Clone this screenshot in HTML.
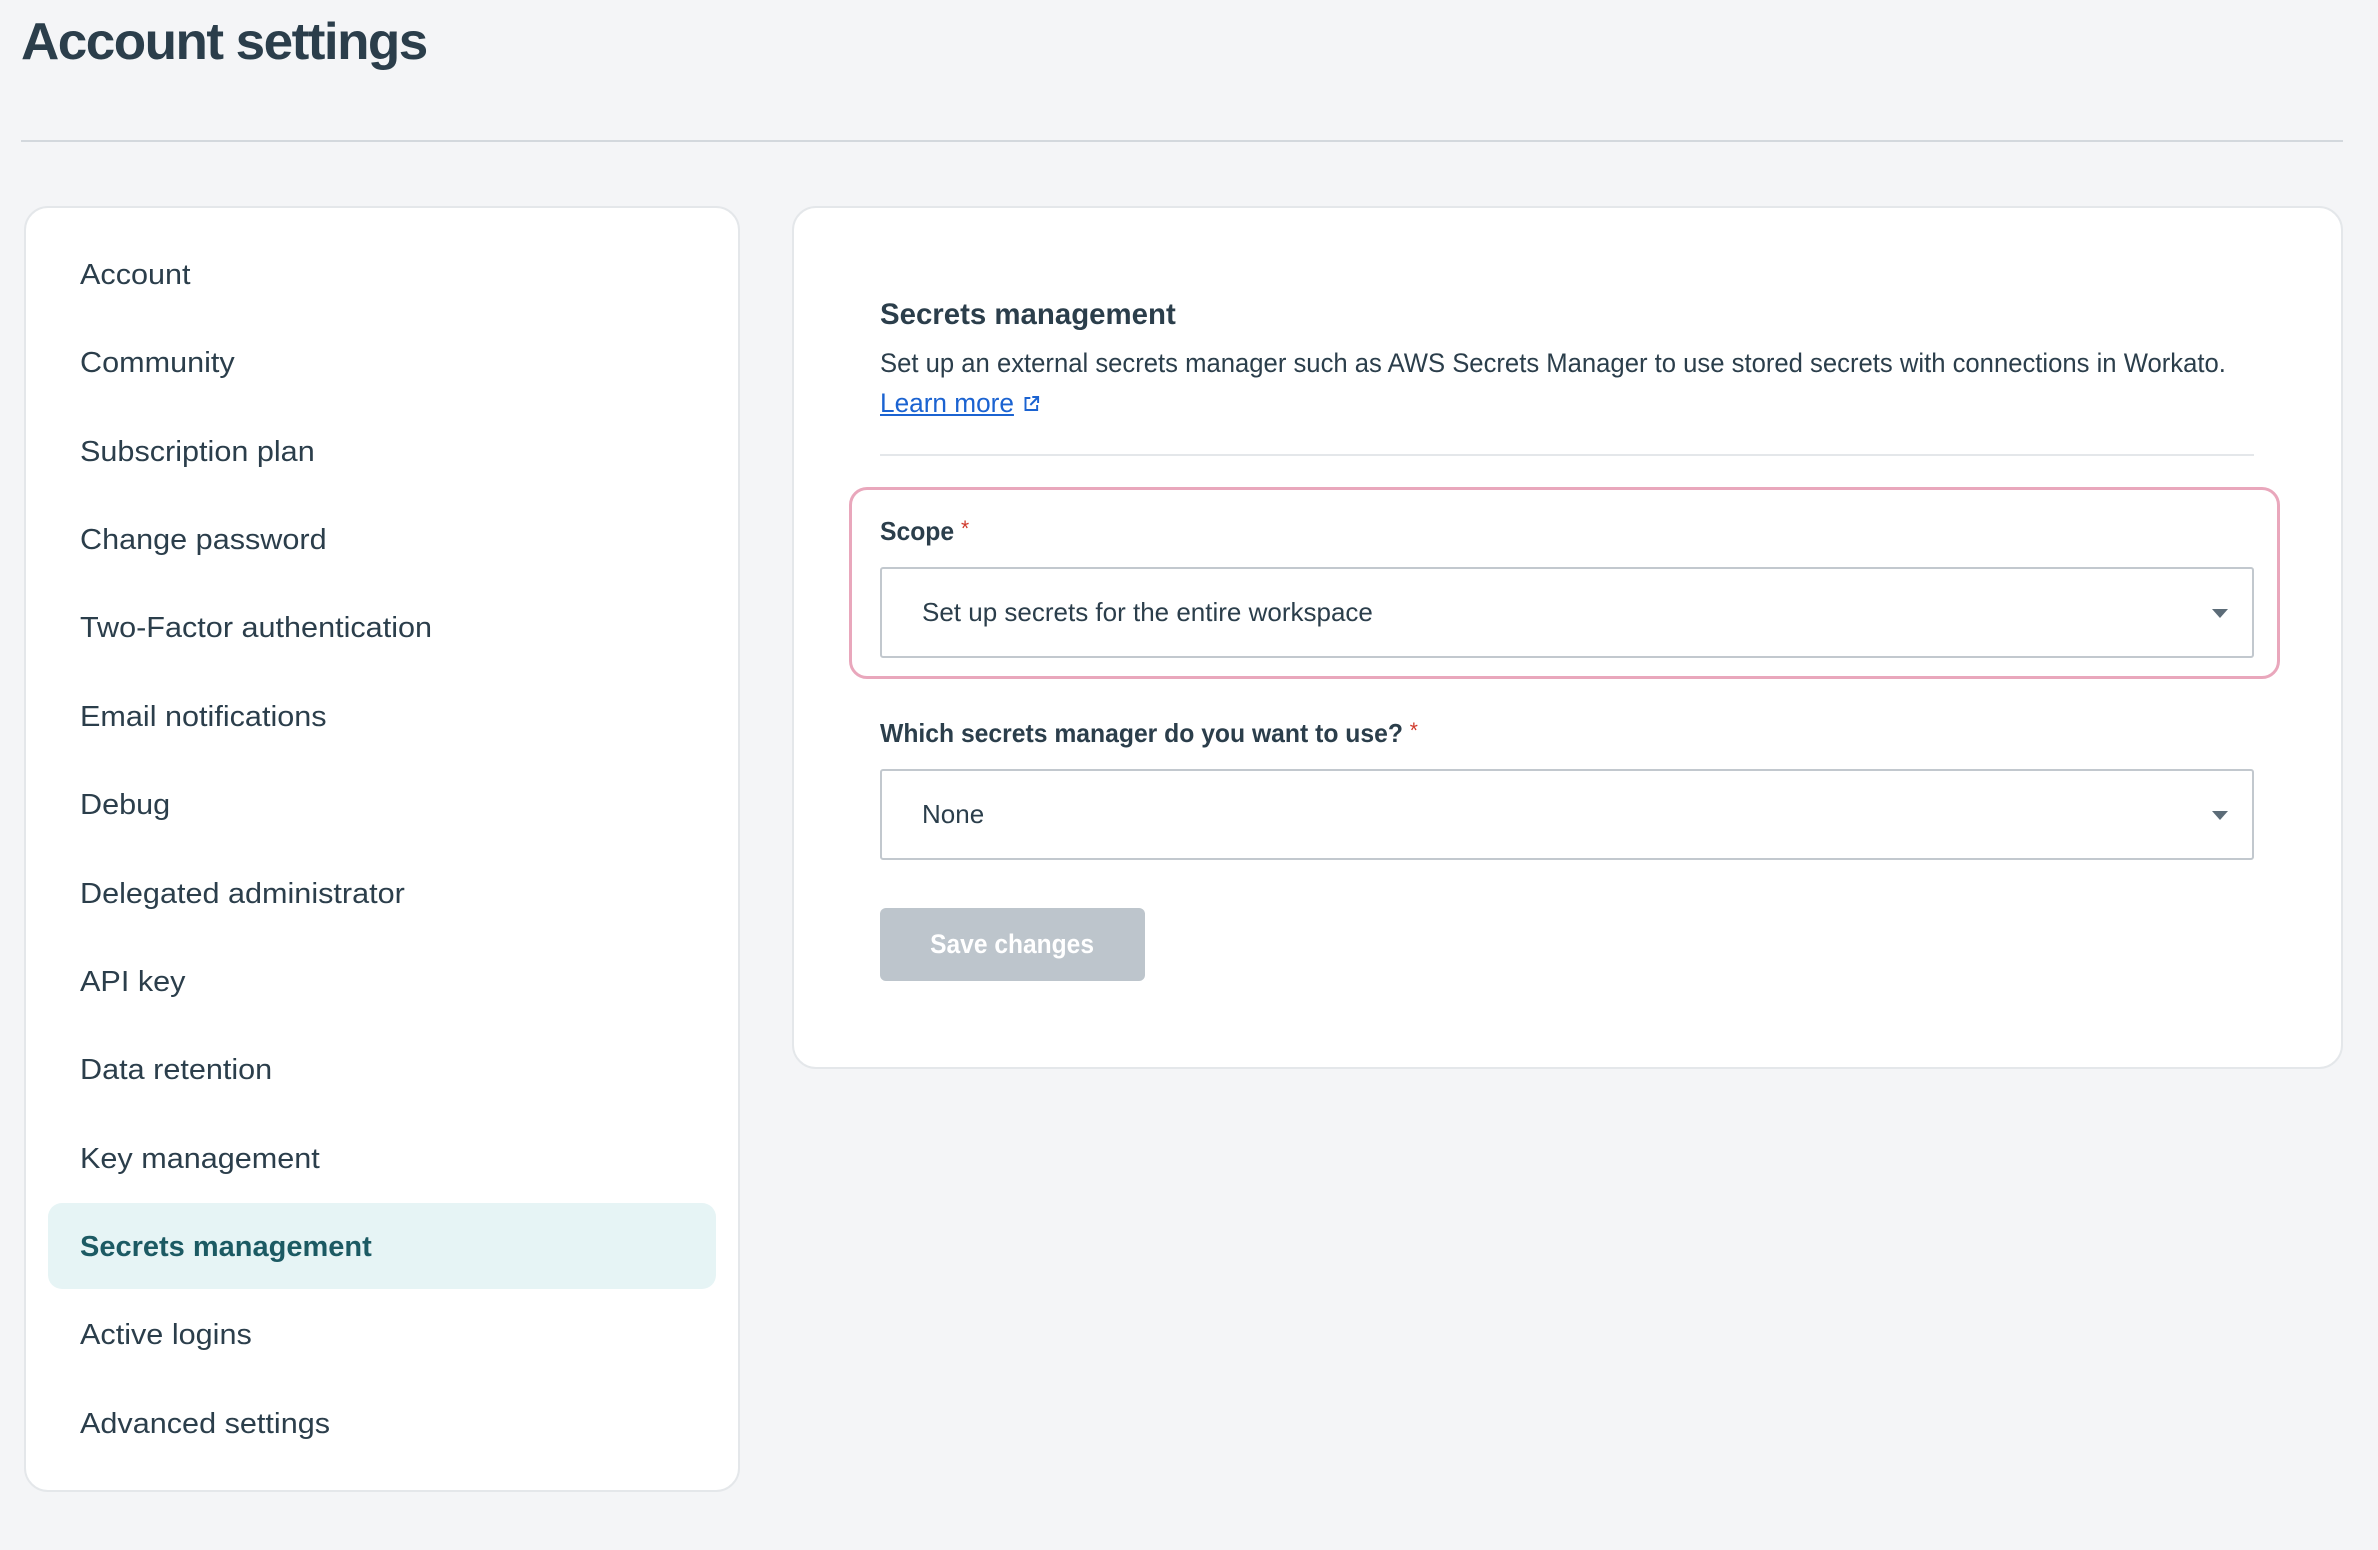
<!DOCTYPE html>
<html><head><meta charset="utf-8"><style>
*{margin:0;padding:0;box-sizing:border-box}
body{width:2378px;height:1550px;background:#f4f5f7;font-family:"Liberation Sans",sans-serif;color:#2b3e4b;position:relative;overflow:hidden}
.a{position:absolute;white-space:nowrap}
h1{position:absolute;left:21px;top:12px;font-size:52px;font-weight:bold;color:#2b3e4b;letter-spacing:-1.5px;transform:scaleX(1.02);transform-origin:left}
.hr{position:absolute;left:21px;top:140px;width:2322px;height:2px;background:#d3d8dd}
.card{position:absolute;background:#fff;border:2px solid #e4e7ea;border-radius:24px}
.mi{position:absolute;left:80px;font-size:29px;line-height:40px;color:#2b3e4b;transform:scaleX(1.055);transform-origin:left;white-space:nowrap}
.act{position:absolute;left:48px;top:1203px;width:668px;height:86px;background:#e6f4f5;border-radius:14px}
.sel{position:absolute;left:880px;width:1374px;height:91px;border:2px solid #c2c8ce;border-radius:3px;background:#fff}
.sel span{position:absolute;left:40px;top:28px;font-size:26px;color:#2b3e4b;white-space:nowrap}
.sel i{position:absolute;right:24px;top:40px;width:0;height:0;border-left:8px solid transparent;border-right:8px solid transparent;border-top:9px solid #5c6c78}
.lbl{position:absolute;left:880px;font-size:26px;font-weight:bold;color:#2b3e4b;transform:scaleX(0.95);transform-origin:left;white-space:nowrap}
.req{color:#d0392b;font-weight:normal;font-size:22px;vertical-align:top}
</style></head><body>
<h1>Account settings</h1>
<div class="hr"></div>
<div class="card" style="left:24px;top:206px;width:716px;height:1286px"></div>
<div class="act"></div>
<div class="mi" style="top:255px">Account</div>
<div class="mi" style="top:343px">Community</div>
<div class="mi" style="top:432px">Subscription plan</div>
<div class="mi" style="top:520px">Change password</div>
<div class="mi" style="top:608px">Two-Factor authentication</div>
<div class="mi" style="top:697px">Email notifications</div>
<div class="mi" style="top:785px">Debug</div>
<div class="mi" style="top:874px">Delegated administrator</div>
<div class="mi" style="top:962px">API key</div>
<div class="mi" style="top:1050px">Data retention</div>
<div class="mi" style="top:1139px">Key management</div>
<div class="mi" style="top:1227px;color:#1c5a63;font-weight:bold;transform:scaleX(1.0)">Secrets management</div>
<div class="mi" style="top:1315px">Active logins</div>
<div class="mi" style="top:1404px">Advanced settings</div>

<div class="card" style="left:792px;top:206px;width:1551px;height:863px"></div>
<div class="a" style="left:880px;top:298px;font-size:30px;font-weight:bold;transform:scaleX(0.98);transform-origin:left">Secrets management</div>
<div class="a" style="left:880px;top:348px;font-size:27px;transform:scaleX(0.95);transform-origin:left">Set up an external secrets manager such as AWS Secrets Manager to use stored secrets with connections in Workato.</div>
<div class="a" style="left:880px;top:388px;font-size:27px;color:#1b63d1;transform:scaleX(0.97);transform-origin:left"><span style="text-decoration:underline">Learn more</span> <svg width="20" height="20" viewBox="0 0 20 20" style="vertical-align:-2px"><path d="M9 4H4v12h12v-5M11 3h6v6M17 3l-8 8" fill="none" stroke="#1b63d1" stroke-width="2"/></svg></div>
<div class="a" style="left:880px;top:454px;width:1374px;height:2px;background:#e4e7ea"></div>
<div class="a" style="left:849px;top:487px;width:1431px;height:192px;border:3px solid #e9a7bc;border-radius:18px"></div>
<div class="lbl" style="top:516px">Scope <span class="req">*</span></div>
<div class="sel" style="top:567px"><span>Set up secrets for the entire workspace</span><i></i></div>
<div class="lbl" style="top:718px">Which secrets manager do you want to use? <span class="req">*</span></div>
<div class="sel" style="top:769px"><span>None</span><i></i></div>
<div class="a" style="left:880px;top:908px;width:265px;height:73px;background:#bdc5cc;border-radius:6px;color:#fff;font-size:27px;font-weight:bold;text-align:center;line-height:73px"><span style="display:inline-block;transform:scaleX(0.91)">Save changes</span></div>
</body></html>
